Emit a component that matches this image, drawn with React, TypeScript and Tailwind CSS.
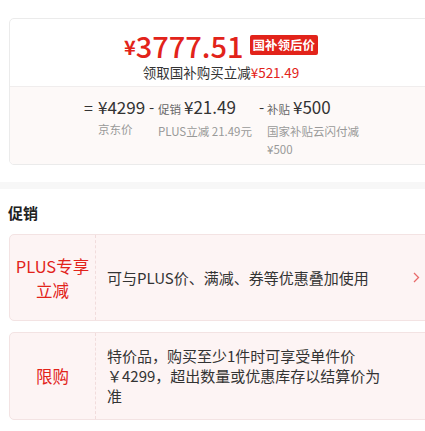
export default function App() {
  const red = "text-[#e2231a]";
  return (
    <div className="w-[425px] h-[431px] overflow-hidden bg-white font-[family-name:'Noto_Sans_CJK_SC','Noto_Sans',sans-serif] text-[#333]">
      {/* Price card */}
      <div className="mt-[18px] ml-[9px] w-[424px] border border-[#ebebeb] rounded-[5px] overflow-hidden">
        <div className="h-[67px] pt-[8px] flex flex-col items-center">
          <div className="flex items-center h-[36px]">
            <span className={`text-[20px] font-bold leading-none mt-[4px] ${red}`}>¥</span>
            <span className={`text-[29px] font-medium leading-none ${red}`}>3777.51</span>
            <span className="ml-[6px] h-[20px] px-[3px] flex items-center bg-[#e2231a] text-white text-[12.5px] font-bold rounded-[2px] leading-none">
              国补领后价
            </span>
          </div>
          <div className="text-[13.5px] leading-[18px] mt-[0px]">
            领取国补购买立减<span className={red}>¥521.49</span>
          </div>
        </div>
        <div className="border-t border-[#f0eded] bg-[#fdf9f8] h-[78px] pl-[74px] pt-[9px] flex items-start">
          <span className="w-[14px] text-[16px] leading-[22px]">=</span>
          <div className="w-[51px] flex flex-col">
            <span className="text-[17px] leading-[22px]">¥4299</span>
            <span className="text-[11.5px] leading-[18px] mt-[2px] text-[#999]">京东价</span>
          </div>
          <span className="w-[9px] text-[15px] leading-[22px]">-</span>
          <div className="w-[101px] flex flex-col">
            <span className="leading-[22px] whitespace-nowrap">
              <span className="text-[11.5px] text-[#666]">促销</span>
              <span className="text-[17px] ml-[3px]">¥21.49</span>
            </span>
            <span className="text-[11.5px] leading-[18px] mt-[2px] text-[#999] whitespace-nowrap">PLUS立减 21.49元</span>
          </div>
          <span className="w-[8px] text-[15px] leading-[22px]">-</span>
          <div className="w-[96px] flex flex-col">
            <span className="leading-[22px] whitespace-nowrap">
              <span className="text-[11.5px] text-[#666]">补贴</span>
              <span className="text-[17px] ml-[3px]">¥500</span>
            </span>
            <span className="text-[11.5px] leading-[18px] mt-[2px] text-[#999]">国家补贴云闪付减¥500</span>
          </div>
        </div>
      </div>

      {/* separator band */}
      <div className="mt-[17px] h-[7px] bg-[#f7f7f7]" />

      {/* Promo */}
      <div className="pl-[8px] pt-[14px] text-[15px] font-bold leading-[20px] text-[#222]">促销</div>

      <div className="mt-[11px] ml-[9px] w-[424px] h-[87px] border border-[#f3e3e3] rounded-[5px] bg-[#fdf4f4] flex items-stretch overflow-hidden">
        <div className={`w-[86px] border-r border-dashed border-[#f1dcdc] flex flex-col items-center justify-center text-[16.5px] leading-[24px] ${red}`}>
          <span>PLUS专享</span>
          <span>立减</span>
        </div>
        <div className="flex-1 flex items-center pl-[11px] pr-[10px]">
          <span className="w-[290px] text-[15px] leading-[20px] text-[#333] whitespace-nowrap">可与PLUS价、满减、券等优惠叠加使用</span>
          <svg width="7" height="11" viewBox="0 0 7 11" className="ml-[16px]">
            <path d="M1 1 L5.5 5.5 L1 10" fill="none" stroke="#e86a6a" strokeWidth="1.3" />
          </svg>
        </div>
      </div>

      <div className="mt-[11px] ml-[9px] w-[424px] h-[88px] border border-[#f3e3e3] rounded-[5px] bg-[#fdf4f4] flex items-stretch overflow-hidden">
        <div className={`w-[86px] border-r border-dashed border-[#f1dcdc] flex flex-col items-center justify-center text-[16.5px] leading-[24px] ${red}`}>
          <span>限购</span>
        </div>
        <div className="flex-1 flex items-center pl-[11px] pr-[10px]">
          <span className="w-[282px] text-[15px] leading-[20px] text-[#333]">
            特价品，购买至少1件时可享受单件价￥4299，超出数量或优惠库存以结算价为准
          </span>
        </div>
      </div>
    </div>
  );
}
